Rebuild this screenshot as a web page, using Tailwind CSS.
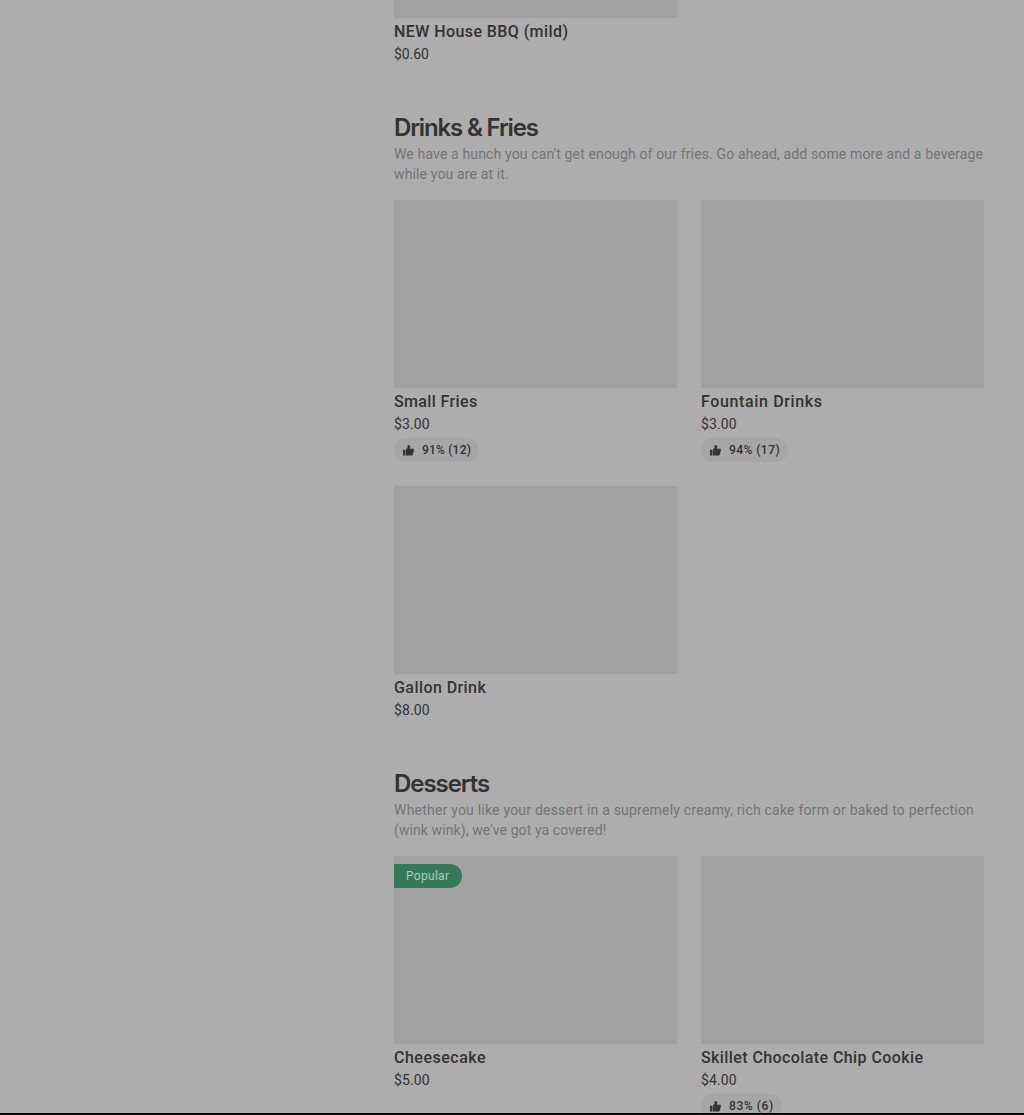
<!DOCTYPE html>
<html lang="en">
<head>
  <meta charset="UTF-8" />
  <meta name="viewport" content="width=device-width, initial-scale=1.0" />
  <title>Menu</title>
  <script src="https://cdn.jsdelivr.net/npm/@tailwindcss/browser@4"></script>
</head>
<body class="bg-[#adadad] font-[Roboto,sans-serif] text-[#333333]">
  <!-- Thumb icon shared by the rating pills -->
  <svg class="hidden">
    <symbol id="thumb" viewBox="0 0 12 12">
      <path d="M0 5.2h2.5v6.3H0zM3.1 5.2 5 3V.7C5 .2 5.4 0 5.9 0c1.3 0 2 .8 2 1.7 0 .9-.3 1.8-.6 2.5h3.4c.8 0 1.4.7 1.2 1.4l-1.2 4.7c-.2.8-.7 1.2-1.5 1.2H3.1z" />
    </symbol>
  </svg>

  <div class="flex h-[1115px] flex-col overflow-hidden">
    <main class="ml-[394px] min-h-0 w-[590px] flex-1 overflow-hidden">
      <!-- Sauces (end of the section) -->
      <section class="grid grid-cols-2 gap-x-6">
        <article>
          <div class="h-[18px] bg-[#a1a1a1]"></div>
          <h3 class="mt-0.5 text-base leading-6 font-medium whitespace-nowrap tracking-[0.42px]">NEW House BBQ (mild)</h3>
          <p class="text-sm leading-5 tracking-[-0.1px]">$0.60</p>
        </article>
      </section>

      <!-- Drinks & Fries -->
      <section class="mt-12">
        <h2 class="font-[Inter,sans-serif] text-2xl leading-8 font-semibold whitespace-nowrap tracking-[-1.15px]">Drinks &amp; Fries</h2>
        <p class="text-sm leading-5 whitespace-nowrap text-[#757575]">
          <span class="tracking-[0.145px]">We have a hunch you can't get enough of our fries. Go ahead, add some more and a beverage</span><br />
          <span class="tracking-[0.14px]">while you are at it.</span>
        </p>
        <div class="mt-4 grid grid-cols-2 gap-6">
          <article>
            <div class="h-[188px] bg-[#a1a1a1]"></div>
            <h3 class="mt-0.5 text-base leading-6 font-medium whitespace-nowrap tracking-[0.36px]">Small Fries</h3>
            <p class="text-sm leading-5 tracking-[0.1px]">$3.00</p>
            <div class="mt-1 flex h-6 w-[85px] items-center gap-2 rounded-full bg-[#a6a6a6] pl-[9px] text-xs font-medium whitespace-nowrap">
              <svg class="size-[11px] fill-current"><use href="#thumb" /></svg>
              <span class="tracking-[0.2px]">91% (12)</span>
            </div>
          </article>
          <article>
            <div class="h-[188px] bg-[#a1a1a1]"></div>
            <h3 class="mt-0.5 text-base leading-6 font-medium whitespace-nowrap tracking-[0.64px]">Fountain Drinks</h3>
            <p class="text-sm leading-5 tracking-[0.1px]">$3.00</p>
            <div class="mt-1 flex h-6 w-[87px] items-center gap-2 rounded-full bg-[#a6a6a6] pl-[9px] text-xs font-medium whitespace-nowrap">
              <svg class="size-[11px] fill-current"><use href="#thumb" /></svg>
              <span class="tracking-[0.45px]">94% (17)</span>
            </div>
          </article>
          <article>
            <div class="h-[188px] bg-[#a1a1a1]"></div>
            <h3 class="mt-0.5 text-base leading-6 font-medium whitespace-nowrap tracking-[0.43px]">Gallon Drink</h3>
            <p class="text-sm leading-5 tracking-[0.1px]">$8.00</p>
          </article>
        </div>
      </section>

      <!-- Desserts -->
      <section class="mt-12">
        <h2 class="font-[Inter,sans-serif] text-2xl leading-8 font-semibold whitespace-nowrap tracking-[-1.05px]">Desserts</h2>
        <p class="text-sm leading-5 whitespace-nowrap text-[#757575]">
          <span class="tracking-[0.21px]">Whether you like your dessert in a supremely creamy, rich cake form or baked to perfection</span><br />
          <span class="tracking-[0.1px]">(wink wink), we've got ya covered!</span>
        </p>
        <div class="mt-4 grid grid-cols-2 gap-6">
          <article>
            <div class="h-[188px] bg-[#a1a1a1] pt-2">
              <div class="flex h-6 w-[68px] items-center rounded-r-full bg-[#347a58] pl-3 text-xs tracking-[0.3px] text-[#b4c6bc]">Popular</div>
            </div>
            <h3 class="mt-0.5 text-base leading-6 font-medium whitespace-nowrap tracking-[0.5px]">Cheesecake</h3>
            <p class="text-sm leading-5 tracking-[0.1px]">$5.00</p>
          </article>
          <article>
            <div class="h-[188px] bg-[#a1a1a1]"></div>
            <h3 class="mt-0.5 text-base leading-6 font-medium whitespace-nowrap tracking-[0.41px]">Skillet Chocolate Chip Cookie</h3>
            <p class="text-sm leading-5 tracking-[0.1px]">$4.00</p>
            <div class="mt-1 flex h-6 w-[81px] items-center gap-2 rounded-full bg-[#a6a6a6] pl-[9px] text-xs font-medium whitespace-nowrap">
              <svg class="size-[11px] fill-current"><use href="#thumb" /></svg>
              <span class="tracking-[0.6px]">83% (6)</span>
            </div>
          </article>
        </div>
      </section>
    </main>
    <div class="h-0.5 bg-black"></div>
  </div>
</body>
</html>
